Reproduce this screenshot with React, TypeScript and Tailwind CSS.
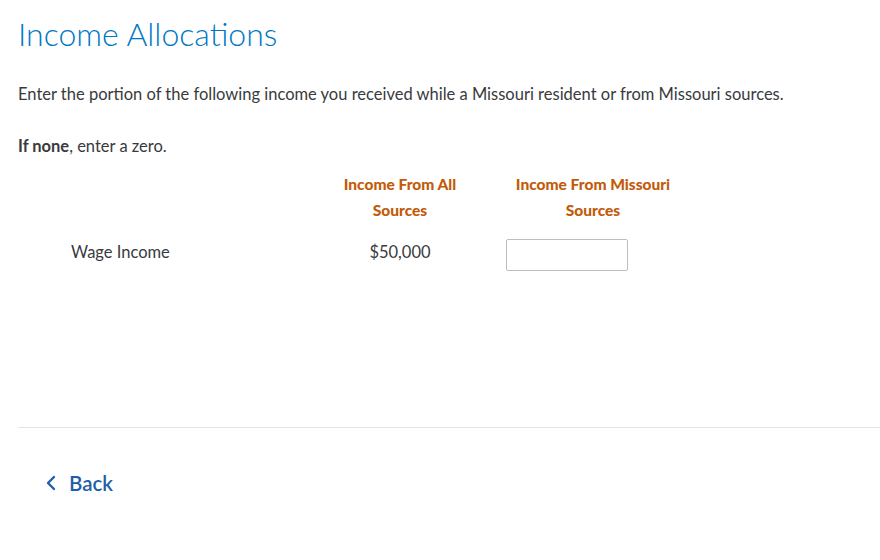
import React from "react";

const Chevron: React.FC = () => (
  <svg width="12" height="16" viewBox="0 0 12 16" fill="none">
    <path d="M9 2L3 8l6 6" stroke="#1f5fa8" strokeWidth="2.4" strokeLinecap="round" strokeLinejoin="round" />
  </svg>
);

const App: React.FC = () => {
  return (
    <div
      className="min-h-[560px] w-[880px] bg-white text-[#393a3d]"
      style={{ fontFamily: "Lato, 'Noto Sans', sans-serif" }}
    >
      <div className="pl-[18px]">
        <h1 className="pt-[15px] text-[32px] leading-[38px] font-light text-[#0077c5]">Income Allocations</h1>
        <p className="mt-[29px] text-[16.5px] leading-[24px]">
          Enter the portion of the following income you received while a Missouri resident or from Missouri sources.
        </p>
        <p className="mt-[28px] text-[16.5px] leading-[24px]">
          <span className="font-bold">If none</span>, enter a zero.
        </p>

        <div className="mt-[13px] grid grid-cols-[287px_190px_196px]">
          <div />
          <div className="text-center text-[15.5px] font-black leading-[26px] text-[#c35a0a]">
            Income From All
            <br />
            Sources
          </div>
          <div className="text-center text-[15.5px] font-black leading-[26px] text-[#c35a0a]">
            Income From Missouri
            <br />
            Sources
          </div>

          <div className="mt-[16px] flex h-[26px] items-center pl-[53px] text-[16.5px]">Wage Income</div>
          <div className="mt-[16px] flex h-[26px] items-center justify-center text-[16.5px]">$50,000</div>
          <div className="mt-[16px] pl-[11px]">
            <input
              type="text"
              className="h-[32px] w-[122px] rounded-[2px] border border-[#babec5] bg-white px-2 text-[15px] outline-none"
            />
          </div>
        </div>

        <div className="mt-[156px] border-t border-[#e3e4e6]" />

        <button className="mt-[41px] ml-[27px] flex h-[28px] items-center gap-[12px] text-[20.5px] font-semibold text-[#1f5fa8]">
          <Chevron />
          Back
        </button>
      </div>
    </div>
  );
};

export default App;
